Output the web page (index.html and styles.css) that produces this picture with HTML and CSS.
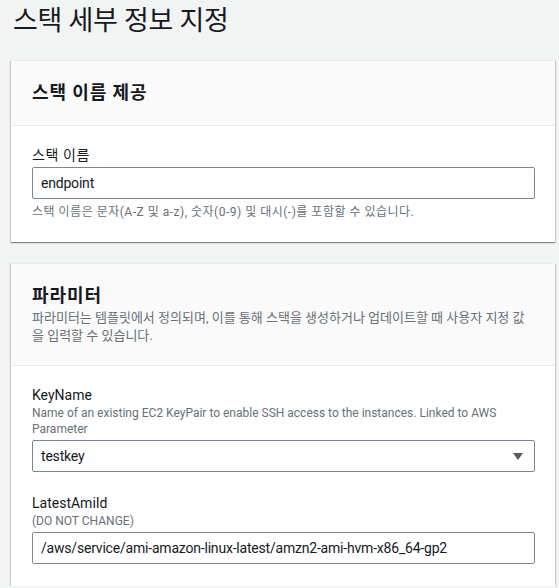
FILE: index.html
```html
<!DOCTYPE html>
<html lang="ko">
<head>
<meta charset="utf-8">
<title>스택 세부 정보 지정</title>
<link rel="stylesheet" href="styles.css">
</head>
<body>
<main class="page">
  <h1 class="page-title">스택 세부 정보 지정</h1>

  <section class="card">
    <header class="card-header">
      <h2 class="card-title">스택 이름 제공</h2>
    </header>
    <div class="card-body">
      <div class="field">
        <label class="field-label">스택 이름</label>
        <div class="input">endpoint</div>
        <p class="hint">스택 이름은 문자(A-Z 및 a-z), 숫자(0-9) 및 대시(-)를 포함할 수 있습니다.</p>
      </div>
    </div>
  </section>

  <section class="card">
    <header class="card-header">
      <h2 class="card-title">파라미터</h2>
      <p class="card-desc">파라미터는 템플릿에서 정의되며, 이를 통해 스택을 생성하거나 업데이트할 때 사용자 지정 값을 입력할 수 있습니다.</p>
    </header>
    <div class="card-body">
      <div class="field">
        <label class="field-label latin">KeyName</label>
        <p class="field-desc">Name of an existing EC2 KeyPair to enable SSH access to the instances. Linked to AWS Parameter</p>
        <div class="input select">
          <span>testkey</span>
          <svg class="caret" width="10" height="7" viewBox="0 0 10 7"><path d="M0 0H10L5 7Z" fill="#545b64"/></svg>
        </div>
      </div>
      <div class="field">
        <label class="field-label latin">LatestAmiId</label>
        <p class="field-desc">(DO NOT CHANGE)</p>
        <div class="input">/aws/service/ami-amazon-linux-latest/amzn2-ami-hvm-x86_64-gp2</div>
      </div>
    </div>
  </section>
</main>
</body>
</html>
```

FILE: styles.css
```css
* { box-sizing: border-box; }

html, body {
  margin: 0;
  padding: 0;
  background: #f2f3f3;
  color: #16191f;
  font-family: Roboto, "Noto Sans CJK KR", sans-serif;
}

.page {
  padding: 0 4px 0 11px;
  display: flex;
  flex-direction: column;
  gap: 21px;
}

.page-title {
  margin: 0 0 -1px 2px;
  padding-top: 3px;
  font-size: 27px;
  line-height: 37px;
  font-weight: 400;
  letter-spacing: -0.3px;
  color: #16191f;
}

.card {
  background: #fff;
  border-top: 1px solid #eaeded;
  box-shadow: 0 1px 1px 0 rgba(0,28,36,.3), 1px 1px 1px 0 rgba(0,28,36,.15), -1px 1px 1px 0 rgba(0,28,36,.15);
}

.card-header {
  background: #fafafa;
  border-bottom: 1px solid #eaeded;
  padding: 20px 20px 20px 21px;
}

.card-title {
  margin: 0;
  font-size: 18px;
  line-height: 24px;
  font-weight: 700;
  letter-spacing: 0.9px;
}

.card-desc {
  margin: 1px 0 0;
  font-size: 13px;
  line-height: 18px;
  letter-spacing: 0;
  color: #687078;
}

.card-body {
  padding: 18px 20px 22px 21px;
  display: flex;
  flex-direction: column;
  gap: 20px;
}

.field {
  display: flex;
  flex-direction: column;
}

.field-label {
  font-size: 14px;
  line-height: 22px;
  letter-spacing: 0.6px;
  color: #16191f;
  margin-bottom: 1px;
}

.field-label.latin { letter-spacing: 0; }

.field-desc {
  margin: -2px 0 3px;
  font-size: 12px;
  line-height: 16px;
  color: #687078;
}

.input {
  height: 32px;
  border: 1px solid #7d8790;
  border-radius: 2px;
  background: #fff;
  padding: 0 8px;
  font-size: 14px;
  line-height: 30px;
  letter-spacing: -0.2px;
  color: #16191f;
  white-space: nowrap;
  overflow: hidden;
}

.select {
  display: flex;
  align-items: center;
  justify-content: space-between;
  padding-right: 11px;
}

.caret { display: block; }

.hint {
  margin: 5px 0 0;
  font-size: 12px;
  line-height: 16px;
  letter-spacing: 0.5px;
  color: #687078;
}
```
